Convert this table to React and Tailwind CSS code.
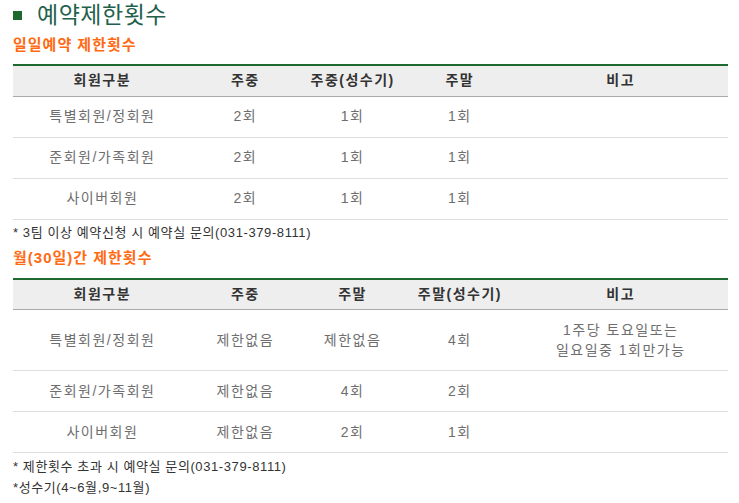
import React from 'react';

const daily = [
    { type: '특별회원/정회원', a: '2회', b: '1회', c: '1회', note: '' },
    { type: '준회원/가족회원', a: '2회', b: '1회', c: '1회', note: '' },
    { type: '사이버회원', a: '2회', b: '1회', c: '1회', note: '' },
];

const monthly = [
    { type: '특별회원/정회원', a: '제한없음', b: '제한없음', c: '4회', note: ['1주당 토요일또는', '일요일중 1회만가능'] },
    { type: '준회원/가족회원', a: '제한없음', b: '4회', c: '2회', note: '' },
    { type: '사이버회원', a: '제한없음', b: '2회', c: '1회', note: '' },
];

const LimitTable = ({ heads, rows }) => (
    <table className="w-[715px] table-fixed border-collapse border-t-2 border-[#1e6a2e]">
        <colgroup>
            <col className="w-[25%]" />
            <col className="w-[15%]" />
            <col className="w-[15%]" />
            <col className="w-[15%]" />
            <col className="w-[30%]" />
        </colgroup>
        <thead>
            <tr className="h-[31px] bg-[#eeeeee] border-b border-[#aaaaaa]">
                {heads.map((h) => (
                    <th key={h} className="text-center text-[14px] font-bold tracking-[1.5px] text-[#333333] p-0">{h}</th>
                ))}
            </tr>
        </thead>
        <tbody>
            {rows.map((r) => (
                <tr key={r.type} className={`border-b border-[#dddddd] text-[14px] tracking-[1.5px] text-[#6e6e6e] ${r.note ? 'h-[61px]' : 'h-[41px]'}`}>
                    <td className="text-center p-0">{r.type}</td>
                    <td className="text-center p-0">{r.a}</td>
                    <td className="text-center p-0">{r.b}</td>
                    <td className="text-center p-0">{r.c}</td>
                    <td className="text-center p-0 leading-[20px]">
                        {r.note && r.note.map((line) => <div key={line}>{line}</div>)}
                    </td>
                </tr>
            ))}
        </tbody>
    </table>
);

export default function App() {
    return (
        <div className="w-[739px] h-[503px] bg-white pl-[13px] font-['Liberation_Sans','Noto_Sans_CJK_KR',sans-serif] overflow-hidden">
            {/* Page title */}
            <div className="flex items-center h-[30px] gap-[15px]">
                <span className="w-[9px] h-[9px] bg-[#1e6a2e]"></span>
                <h1 className="text-[23px] leading-[30px] tracking-[0.5px] text-[#23614c]">예약제한횟수</h1>
            </div>

            <h2 className="mt-[1px] h-[28px] text-[15px] leading-[28px] font-bold tracking-[1px] text-[#ff6a13]">일일예약 제한횟수</h2>
            <div className="h-[5px]"></div>
            <LimitTable heads={['회원구분', '주중', '주중(성수기)', '주말', '비고']} rows={daily} />
            <p className="h-[25px] text-[13px] leading-[26px] tracking-[0.6px] text-[#333333]">* 3팀 이상 예약신청 시 예약실 문의(031-379-8111)</p>

            <h2 className="h-[27px] text-[15px] leading-[26px] font-bold tracking-[1px] text-[#ff6a13]">월(30일)간 제한횟수</h2>
            <div className="h-[6px]"></div>
            <LimitTable heads={['회원구분', '주중', '주말', '주말(성수기)', '비고']} rows={monthly} />
            <p className="h-[22px] text-[13px] leading-[28px] tracking-[0.6px] text-[#333333]">* 제한횟수 초과 시 예약실 문의(031-379-8111)</p>
            <p className="h-[22px] text-[13px] leading-[26px] tracking-[0.6px] text-[#333333]">*성수기(4~6월,9~11월)</p>
        </div>
    );
}
